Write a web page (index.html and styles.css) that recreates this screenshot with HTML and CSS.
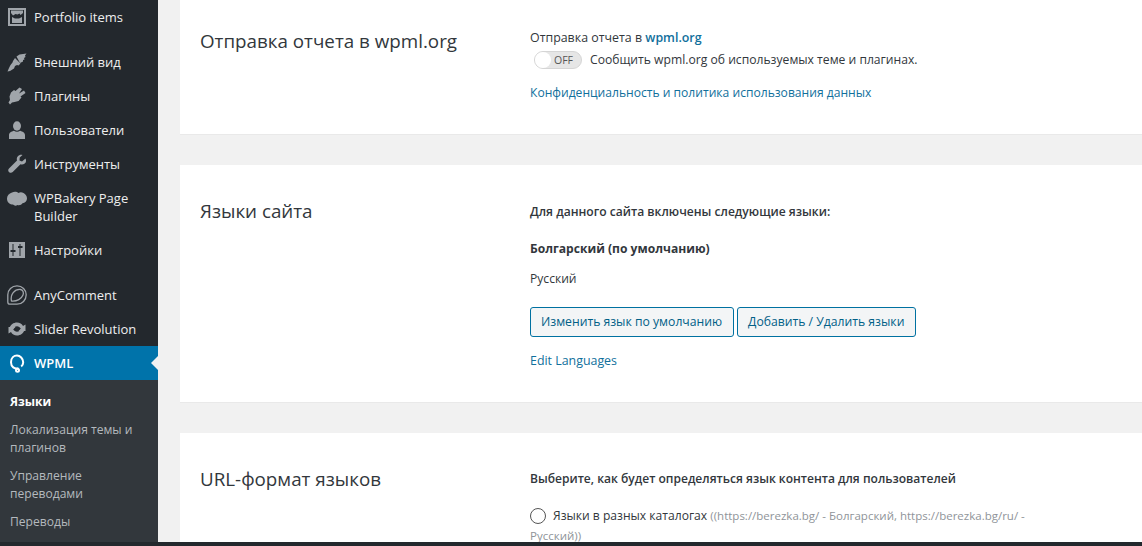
FILE: index.html
```html
<!DOCTYPE html>
<html lang="ru">
<head>
<meta charset="utf-8">
<title>WPML</title>
<link rel="stylesheet" href="styles.css">
</head>
<body>
<div class="app">
  <nav class="sidebar">
    <a class="item"><svg class="ico" viewBox="0 0 20 20"><path fill-rule="evenodd" d="M1 1h18v18H1zM3 3v14h14V3z"/><path d="M4 3.500h12v2.500l-2.500 2-1-1.500-2 1-2-.5L6 8.500 4 6zM5 10l3 1.500h4l3-1.500v6H5z"/></svg><span>Portfolio items</span></a>
    <div class="sep"></div>
    <a class="item"><svg class="ico" viewBox="0 0 20 20"><path d="M9.500 4.500l3-2 7-1-1.500 2 .5 1.500-1.500 1 .5 1.500-1.500.5 0 1.500-3 1.500z"/><path d="M8 6l5.500 5.500-2 2-1.500-.5-2 1-1 2.500-4 2.500-2.500.5 1.500-3.500 1.500-3 2-2.500.5-1.500z"/></svg><span>Внешний вид</span></a>
    <a class="item"><svg class="ico" viewBox="0 0 20 20"><path d="M12.500 1.500l2.500 1.500-3 4.500 5-3 1.500 2.500-5 3.500 1 1-3 3.500-4 1-2.500.5-2 2L1.500 16.500l1.500-2.500-.5-3.500 1.500-4 3-2.500 1.500 1z"/></svg><span>Плагины</span></a>
    <a class="item"><svg class="ico" viewBox="0 0 20 20"><ellipse cx="10" cy="6" rx="4" ry="4.700"/><path d="M2 19v-4c0-2.500 2.500-3.500 5-4.300 1.500 1.300 4.500 1.300 6 0 2.500.8 5 1.800 5 4.300v4z"/></svg><span>Пользователи</span></a>
    <a class="item"><svg class="ico" viewBox="0 0 20 20"><path d="M18.500 4.500l-3.500 3-2.500-1 .2-3L15.500 1c-3.500-.8-6.500 2-5.500 5.500L2 14.500c-1.300 1.300-.8 3 .2 3.700s2.500.8 3.500-.2l7.800-7.800c4 1 6.800-2 5-5.700z"/></svg><span>Инструменты</span></a>
    <a class="item"><svg class="ico cloud" viewBox="0 0 20 20"><path d="M5 2.500c2.500-1.300 5-.8 6.500.5 1.500-1 3.500-.8 5 0 2 1 3.500 3 3.500 5.500 0 2.700-2 4.500-4.500 4.800-1 1.700-3 2.200-5 1.700-1.500 1-3.500.8-4.500-.5C3 14.500 0 12.500 0 8.500 0 5.500 2 3.500 5 2.500z"/></svg><span>WPBakery Page Builder</span></a>
    <a class="item"><svg class="ico" viewBox="0 0 20 20"><path fill-rule="evenodd" d="M2 2h16v16H2zM5.500 4v6H3.500v2h2v4h1v-4h2v-2h-2V4zM12.500 4v2h-1.500v2h1.500v8h1V8h2V6h-2V4z"/></svg><span>Настройки</span></a>
    <div class="sep"></div>
    <a class="item"><svg class="ico" viewBox="0 0 20 20"><g class="line"><path d="M10 .8c5.300 0 9.200 4 9.200 9 0 5.200-4 9.400-9.200 9.400H3c-1.300 0-2.200-.9-2.200-2.200V9.800C.8 4.800 4.800.8 10 .8z"/><path d="M4.500 16c-1.500-6.500 3-12 9-11.500 2.500.3 3.500 3 2.500 5.500-1.500 3.800-6 6.500-11.500 6z"/></g></svg><span>AnyComment</span></a>
    <a class="item"><svg class="ico" viewBox="0 0 20 20"><path d="M10 3.500c2.700 0 5 1.200 6 3.500l2.500-1.500v6.500h-7l2.300-2.200C13 8.300 11.500 7.300 10 7.300c-1.800 0-3 1-3.600 2.700L2.600 9C3.500 5.700 6.500 3.500 10 3.500z"/><path d="M10 16.500c-2.700 0-5-1.200-6-3.500l-2.500 1.500V8h7l-2.300 2.200c.8 1.500 2.300 2.500 3.800 2.500 1.800 0 3-1 3.600-2.700l3.800 1c-.9 3.300-3.900 5.500-7.400 5.500z"/></svg><span>Slider Revolution</span></a>
    <a class="item current"><svg class="ico" viewBox="0 0 20 20"><g class="line white"><path d="M11.500 15.300c-4 1-7.500-1.500-7.500-6S7 2.500 10 2.500s6.200 3 6.200 6.800c0 2-.7 3.200-2 4.200"/><circle cx="10.500" cy="17.300" r="1.500"/></g></svg><span>WPML</span></a>
    <div class="submenu">
      <a class="sub active">Языки</a>
      <a class="sub">Локализация темы и плагинов</a>
      <a class="sub">Управление переводами</a>
      <a class="sub">Переводы</a>
    </div>
  </nav>
  <main class="content">
    <section class="card first">
      <h2>Отправка отчета в wpml.org</h2>
      <div class="body">
        <p class="medium">Отправка отчета в <a class="link semi">wpml.org</a></p>
        <div class="toggle-row"><span class="toggle"><span class="knob"></span><span class="off">OFF</span></span><span>Сообщить wpml.org об используемых теме и плагинах.</span></div>
        <p class="privacy"><a class="link">Конфиденциальность и политика использования данных</a></p>
      </div>
    </section>
    <section class="card second">
      <h2>Языки сайта</h2>
      <div class="body">
        <p class="semi">Для данного сайта включены следующие языки:</p>
        <p class="bold lang">Болгарский (по умолчанию)</p>
        <p class="lang2">Русский</p>
        <div class="buttons"><a class="btn">Изменить язык по умолчанию</a><a class="btn">Добавить / Удалить языки</a></div>
        <p class="edit"><a class="link">Edit Languages</a></p>
      </div>
    </section>
    <section class="card third">
      <h2>URL-формат языков</h2>
      <div class="body">
        <p class="semi choose">Выберите, как будет определяться язык контента для пользователей</p>
        <div class="radio-row"><span class="radio"></span><p>Языки в разных каталогах <span class="muted">((https://berezka.bg/ - Болгарский, https://berezka.bg/ru/ - Русский))</span></p></div>
      </div>
    </section>
  </main>
</div>
<div class="bottom"></div>
</body>
</html>
```
FILE: styles.css
```css
* { box-sizing: border-box; }
html, body { margin: 0; height: 546px; overflow: hidden; }
body {
  font-family: "Open Sans", "Noto Sans", sans-serif;
  font-size: 12.100px;
  line-height: 18px;
  color: #32373c;
  background: #f1f1f1;
  display: flex;
  flex-direction: column;
}
p { margin: 0; }
a { text-decoration: none; }
.app { display: flex; height: 542px; overflow: hidden; }
.bottom { height: 4px; background: #23282d; }

.sidebar { width: 158px; flex: none; background: #23282d; color: #eee; font-size: 13px; }
.item { display: flex; align-items: center; padding: 8px 10px 8px 7px; gap: 7px; position: relative; color: #eee; }
.ico { width: 20px; height: 20px; margin: -1px 0; flex: none; fill: #a0a5aa; overflow: visible; }
.ico.cloud { align-self: flex-start; margin-top: 1px; }
.line { fill: none; stroke: #a0a5aa; stroke-width: 1.300; }
.line.white { stroke: #fff; stroke-width: 2; }
.sep { height: 11px; }
.current { background: #0073aa; color: #fff; font-weight: 600; }
.current::after {
  content: ""; position: absolute; right: 0; top: 10px;
  border: 7px solid transparent; border-right-color: #f1f1f1; border-left-width: 0;
}
.submenu { background: #32373c; padding: 8px 0; height: 162px; font-size: 12.100px; }
.sub { display: block; padding: 5px 10px; color: #b4b9be; }
.sub.active { color: #fff; font-weight: 700; }

.content { flex: 1; padding-left: 22px; min-width: 0; display: flex; flex-direction: column; gap: 30px; }
.card { background: #fff; display: flex; padding-left: 20px; flex: none; border-bottom: 1px solid #e9e9e9; }
.card.first { height: 135px; padding-top: 28px; }
.card.second { height: 238px; padding-top: 33px; }
.card.third { height: 200px; padding-top: 33px; }
h2 { margin: 0; width: 330px; flex: none; font-size: 18.800px; font-weight: 400; line-height: 26px; color: #32373c; }
.body { width: 510px; }
.first .body { padding-top: 1px; }
.second .body { padding-top: 5px; }
.third .body { padding-top: 4px; }
.link { color: #11709c; }
.semi { font-weight: 600; }
.medium { font-weight: 500; font-size: 12.400px; }
.bold { font-weight: 700; }
.choose { font-size: 12.050px; }
.toggle-row { display: flex; align-items: center; gap: 8px; margin: 4px 0 0 4px; height: 18px; font-size: 12.150px; }
.toggle { width: 48px; height: 18px; border-radius: 9px; background: #e6e6e6; border: 1px solid #d5d5d5; display: flex; align-items: center; flex: none; }
.knob { width: 16px; height: 16px; border-radius: 50%; background: #fff; }
.off { font-size: 10.500px; margin-left: 3px; color: #555; }
.privacy { margin-top: 15px; }
.lang { margin-top: 19px; }
.lang2 { margin-top: 12px; }
.buttons { display: flex; gap: 3px; margin-top: 19px; }
.btn { height: 30px; padding: 0 11px 0 10px; line-height: 28px; border: 1px solid #0071a1; border-radius: 3px; background: #f3f5f6; color: #016087; white-space: nowrap; font-size: 12.200px; }
.edit { margin-top: 15px; font-size: 12.400px; }
.radio-row { margin-top: 18px; position: relative; line-height: 20px; }
.radio { position: absolute; left: 0; top: 2px; width: 16px; height: 16px; border: 1px solid #555; border-radius: 50%; background: #fff; }
.radio-row p { text-indent: 23px; }
.muted { color: #8f9499; font-size: 11.500px; }
```
